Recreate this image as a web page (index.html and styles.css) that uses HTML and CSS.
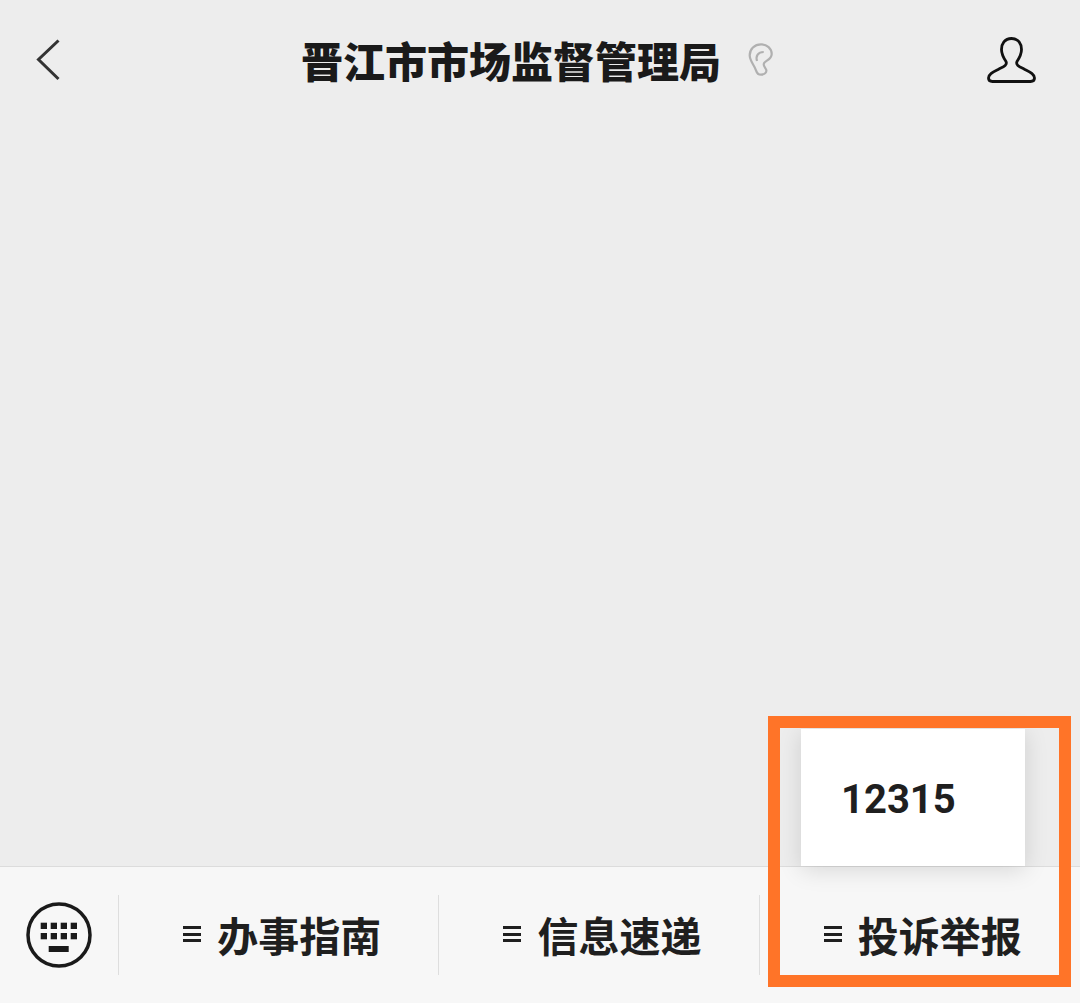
FILE: index.html
```html
<!DOCTYPE html>
<html lang="zh-CN">
<head>
  <meta charset="utf-8">
  <title>晋江市市场监督管理局</title>
  <link rel="stylesheet" href="styles.css">
</head>
<body>
  <div class="screen">
    <header class="topbar">
      <svg class="back-icon" width="26" height="42" viewBox="0 0 26 42">
        <path d="M23.5 1.500 L3.500 20.500 L23.500 40" fill="none" stroke="#333" stroke-width="3"/>
      </svg>
      <div class="title-wrap">
        <h1 class="title">晋江市市场监督管理局</h1>
        <svg class="ear-icon" width="26" height="34" viewBox="0 0 26 34">
          <path d="M13 1.300 C6.500 1.300 1.700 6 1.700 12.300 C1.700 18 6 21.500 8 27.300 C9 30.500 11 31.700 13 31.700 C16.500 31.700 18.800 29.500 18.300 27 C17.800 25 15.700 24 15.700 21.300 C15.700 17.500 23.700 17.500 23.700 11 C23.700 5.500 19 1.300 13 1.300 Z" fill="none" stroke="#b0b0b0" stroke-width="2.200"/>
          <path d="M9 18 C7.500 13 10 9 15.700 9" fill="none" stroke="#b0b0b0" stroke-width="2.200"/>
        </svg>
      </div>
      <svg class="user-icon" width="50" height="46" viewBox="0 0 50 46">
        <path d="M25.500 1.500 C18.500 1.500 15.500 7 15.500 12.500 C15.500 17.500 18 21.500 20 24.500 C21.500 28 18 29.500 13 32 C8.500 34.300 2.500 36.500 2.500 41 C2.500 43.500 4 44.500 6.500 44.500 L44.500 44.500 C47 44.500 48.500 43.500 48.500 41 C48.500 36.500 42.500 34.300 38 32 C33 29.500 29.500 28 31 24.500 C33 21.500 35.500 17.500 35.500 12.500 C35.500 7 32.500 1.500 25.500 1.500 Z" fill="none" stroke="#111" stroke-width="2.800"/>
      </svg>
    </header>

    <main class="chat"></main>

    <nav class="menubar">
      <div class="keyboard-cell">
        <svg width="66" height="66" viewBox="0 0 66 66">
          <circle cx="33" cy="33" r="31" fill="none" stroke="#1a1a1a" stroke-width="3.500"/>
          <g fill="#1a1a1a">
            <rect x="14.700" y="20.700" width="6.300" height="6.300"/>
            <rect x="24.700" y="20.700" width="6.300" height="6.300"/>
            <rect x="34.700" y="20.700" width="6.300" height="6.300"/>
            <rect x="44.700" y="20.700" width="6.300" height="6.300"/>
            <rect x="14.700" y="31" width="6.300" height="6.300"/>
            <rect x="24.700" y="31" width="6.300" height="6.300"/>
            <rect x="34.700" y="31" width="6.300" height="6.300"/>
            <rect x="44.700" y="31" width="6.300" height="6.300"/>
            <rect x="22.700" y="44" width="20" height="6"/>
          </g>
        </svg>
      </div>
      <div class="menu-item"><span class="menu-lines"></span>办事指南</div>
      <div class="menu-item"><span class="menu-lines"></span>信息速递</div>
      <div class="menu-item"><span class="menu-lines"></span>投诉举报</div>
    </nav>

    <div class="submenu">12315</div>
    <div class="highlight"></div>
  </div>
</body>
</html>
```

FILE: styles.css
```css
* {
  box-sizing: border-box;
}
html, body {
  margin: 0;
  padding: 0;
}
body {
  font-family: "Noto Sans CJK SC", "Noto Sans", sans-serif;
  background-color: #ededed;
  color: #1a1a1a;
}
.screen {
  position: relative;
  width: 1080px;
  height: 1003px;
  display: flex;
  flex-direction: column;
  overflow: hidden;
}
.topbar {
  height: 120px;
  display: flex;
  align-items: center;
  padding: 0 44px 0 35px;
  justify-content: space-between;
}
.title-wrap {
  display: flex;
  align-items: center;
  gap: 27px;
  margin-left: 28px;
}
.title {
  margin: 0;
  font-size: 42px;
  line-height: 1;
  font-weight: 900;
  color: #1a1a1a;
}
.chat {
  flex: 1;
}
.menubar {
  height: 137px;
  display: flex;
  background-color: #f7f7f7;
  border-top: 1px solid #dcdcdc;
}
.keyboard-cell {
  width: 119px;
  flex-shrink: 0;
  display: flex;
  align-items: center;
  justify-content: center;
  padding-right: 2px;
}
.menu-item {
  flex: 1;
  display: flex;
  align-items: center;
  justify-content: center;
  gap: 16px;
  padding-left: 6px;
  padding-bottom: 2px;
  font-size: 41px;
  font-weight: 700;
  color: #1f1f1f;
  position: relative;
}
.menu-item::before {
  content: "";
  position: absolute;
  left: -1px;
  top: 28px;
  bottom: 28px;
  border-left: 1px solid #dedede;
}
.menu-lines {
  width: 18px;
  height: 16px;
  border-top: 3px solid #1f1f1f;
  border-bottom: 3px solid #1f1f1f;
  position: relative;
}
.menu-lines::after {
  content: "";
  position: absolute;
  left: 0;
  right: 0;
  top: 3.500px;
  border-top: 3px solid #1f1f1f;
}
.submenu {
  position: absolute;
  left: 801px;
  top: 729px;
  width: 224px;
  height: 137px;
  background-color: #fff;
  box-shadow: 0 4px 22px rgba(0, 0, 0, 0.13);
  padding: 45px 0 0 40px;
  font-family: Roboto, "Noto Sans", sans-serif;
  font-size: 40px;
  font-weight: 700;
  line-height: 1.3;
  color: #1f1f1f;
}
.highlight {
  position: absolute;
  left: 768px;
  top: 716px;
  width: 303px;
  height: 271px;
  border: 12px solid #ff7428;
}
```
